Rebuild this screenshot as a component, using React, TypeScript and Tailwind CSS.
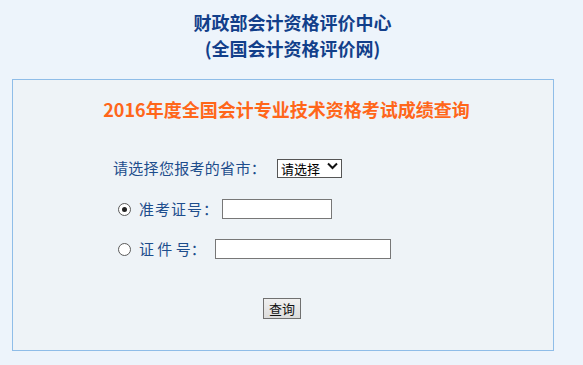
import { useState } from 'react';

const font = { fontFamily: '"Noto Sans CJK SC", "Noto Sans", sans-serif' };

function Radio({ checked, onClick }: { checked: boolean; onClick: () => void }) {
  return (
    <span
      onClick={onClick}
      className="w-[13px] h-[13px] rounded-full border border-[#5a5a5a] bg-white flex items-center justify-center shrink-0 cursor-pointer"
    >
      {checked && <span className="w-[5px] h-[5px] rounded-full bg-[#222]"></span>}
    </span>
  );
}

export default function App() {
  const [mode, setMode] = useState<'zkz' | 'zj'>('zkz');

  return (
    <div className="min-h-screen bg-[#edf4fb] pt-[9px]" style={font}>
      {/* header */}
      <div className="text-center text-[#123f8a] font-bold text-[18px] leading-[26px] pl-[2px]">
        <div>财政部会计资格评价中心</div>
        <div>(全国会计资格评价网)</div>
      </div>

      {/* main box */}
      <div className="ml-[12px] mt-[18px] w-[542px] h-[272px] border border-[#8fbde8] bg-[#eef3f7] flex flex-col">
        <h1 className="mt-[17px] text-center text-[18px] leading-[24px] font-bold text-[#ff661a] pl-[7px]">
          2016年度全国会计专业技术资格考试成绩查询
        </h1>

        <div className="pl-[100px] mt-[37px] flex flex-col text-[#1d4d8c] text-[15px]">
          <div className="flex items-center h-[20px]">
            <span className="tracking-[0.3px]">请选择您报考的省市：</span>
            <div className="relative ml-[11px]">
              <select className="appearance-none w-[65px] h-[19px] border border-[#555] bg-white text-black text-[13px] leading-[17px] pl-[3px] outline-none">
                <option>请选择</option>
              </select>
              <svg className="absolute right-[4px] top-[5px] pointer-events-none" width="11" height="8" viewBox="0 0 11 8">
                <path d="M1 1.5 L5.5 6 L10 1.5" fill="none" stroke="#111" strokeWidth="2" />
              </svg>
            </div>
          </div>

          <div className="flex items-center h-[20px] mt-[21px] pl-[5px]">
            <Radio checked={mode === 'zkz'} onClick={() => setMode('zkz')} />
            <span className="ml-[8px] tracking-[1px]">准考证号：</span>
            <input className="ml-[3px] w-[110px] h-[20px] border border-[#777] bg-white outline-none" />
          </div>

          <div className="flex items-center h-[20px] mt-[20px] pl-[5px]">
            <Radio checked={mode === 'zj'} onClick={() => setMode('zj')} />
            <span className="ml-[8px] whitespace-pre">证 件 号：</span>
            <input className="ml-[9px] w-[176px] h-[20px] border border-[#777] bg-white outline-none" />
          </div>
        </div>

        <div className="flex justify-center mt-[39px] pr-[2px]">
          <button className="w-[38px] h-[21px] border border-[#707070] bg-gradient-to-b from-[#f0f0f0] to-[#dcdcdc] text-[13px] leading-[19px] text-[#111]">
            查询
          </button>
        </div>
      </div>
    </div>
  );
}
